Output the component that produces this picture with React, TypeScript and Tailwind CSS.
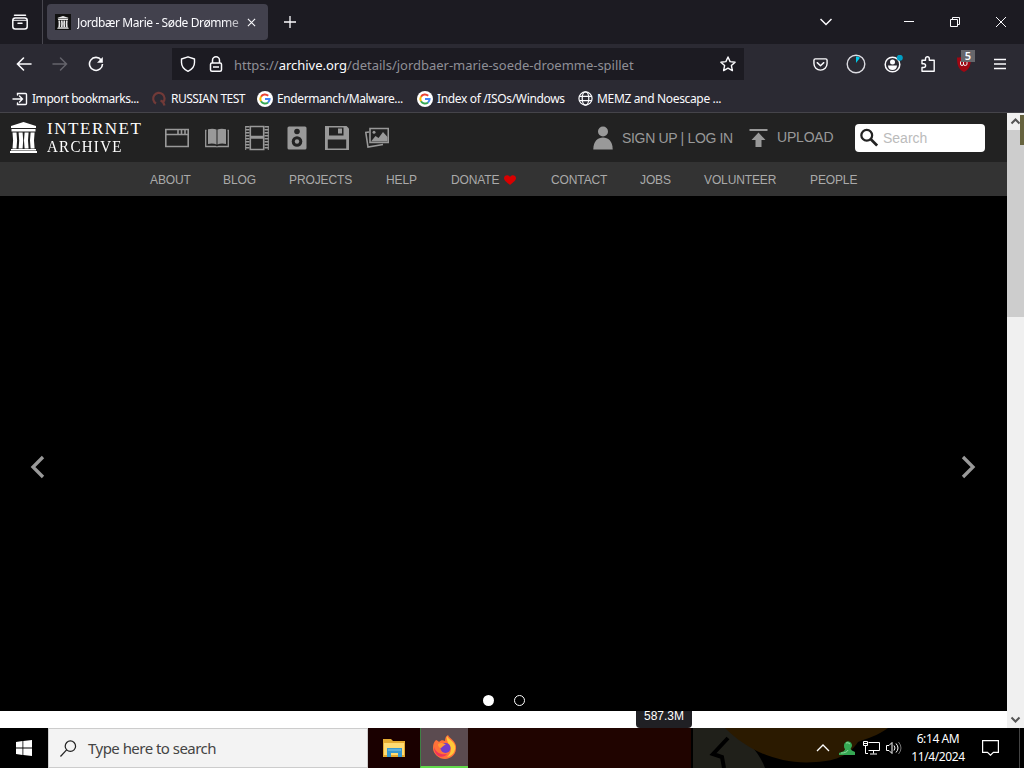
import React from 'react';

const ArchiveLogo: React.FC<{ className?: string }> = ({ className }) => (
    <svg viewBox="0 0 27 31" className={className} fill="currentColor">
        <path d="M13.5 0 26 4v2H1V4zM1.5 7h24v2.5h-24zM2.5 10.5h4l.6 8-.6 8h-4l.6-8zM8.6 10.5h4l.6 8-.6 8h-4l.6-8zM14.6 10.5h4l-.6 8 .6 8h-4l-.6-8zM20.6 10.5h4l-.6 8 .6 8h-4l-.6-8zM1 27h25v1.5H1zM0 29h27v2H0z" />
    </svg>
);

const GoogleIcon: React.FC = () => (
    <svg viewBox="0 0 16 16" className="w-4 h-4" fill="none" strokeWidth="2">
        <circle cx="8" cy="8" r="8" fill="#fff" />
        <path d="M4 5.7A4.6 4.6 0 0 1 11.2 4.8" stroke="#ea4335" />
        <path d="M4 5.6a4.7 4.7 0 0 0 0 4.8" stroke="#fbbc05" />
        <path d="M4 10.3a4.6 4.6 0 0 0 7 1.1" stroke="#34a853" />
        <path d="M8 8h4.6a4.7 4.7 0 0 1-1.6 3.5" stroke="#4285f4" />
    </svg>
);

const TabBar: React.FC = () => (
    <div className="h-11 flex items-center bg-[#1c1b22] text-[#fbfbfe]">
        <div className="w-[43px] h-full flex items-center justify-center border-r border-[#48474f] pr-[2px]">
            <svg viewBox="0 0 16 16" className="w-4 h-4" fill="none" stroke="currentColor" strokeWidth="1.5" strokeLinecap="round">
                <path d="M2.5 1.2h11M6 9.2h4" />
                <rect x=".8" y="4" width="14.4" height="11" rx="2.5" />
                <path d="M1 6.3h14" strokeWidth="1" />
            </svg>
        </div>
        <div className="ml-1 w-[221px] h-9 flex items-center rounded bg-[#42414d] pl-2">
            <div className="w-4 h-4 bg-[#111] flex items-center justify-center">
                <ArchiveLogo className="w-3 h-[13px] text-[#e8e8e8]" />
            </div>
            <div className="ml-[6px] w-[165px] pt-px whitespace-nowrap text-[12px] tracking-[-0.4px] [mask-image:linear-gradient(to_right,#000_88%,#0008)]">
                Jordbær Marie - Søde Drømme
            </div>
            <svg viewBox="0 0 10 10" className="ml-[5px] w-[9px] h-[9px]" stroke="currentColor" strokeWidth="1.2">
                <path d="m1 1 8 8M9 1 1 9" />
            </svg>
        </div>
        <svg viewBox="0 0 12 12" className="ml-4 w-3 h-3" stroke="currentColor" strokeWidth="1.3">
            <path d="M6 0v12M0 6h12" />
        </svg>
        <svg viewBox="0 0 12 8" className="ml-[524px] w-3 h-2" fill="none" stroke="currentColor" strokeWidth="1.5">
            <path d="m.5 1 5.5 5.5L11.5 1" />
        </svg>
        <svg viewBox="0 0 10 10" className="ml-[72px] w-[10px] h-[10px]" stroke="currentColor">
            <path d="M0 4.5h10" />
        </svg>
        <svg viewBox="0 0 10 10" className="ml-9 w-[10px] h-[10px]" fill="none" stroke="currentColor">
            <path d="M.5 2.5h7v7h-7zM2.5 2.5v-2h7v7h-2" />
        </svg>
        <svg viewBox="0 0 10 10" className="ml-9 w-[10px] h-[10px]" stroke="currentColor">
            <path d="m0 0 10 10M10 0 0 10" />
        </svg>
    </div>
);

const Toolbar: React.FC = () => (
    <div className="h-10 flex items-center bg-[#2b2a33] text-[#fbfbfe]">
        <svg viewBox="0 0 16 16" className="ml-4 w-4 h-4" fill="none" stroke="currentColor" strokeWidth="1.6" strokeLinecap="round">
            <path d="M15 8H1.5M7.5 2l-6 6 6 6" />
        </svg>
        <svg viewBox="0 0 16 16" className="ml-5 w-4 h-4 text-[#65646c]" fill="none" stroke="currentColor" strokeWidth="1.5" strokeLinecap="round">
            <path d="M1 8h13.5M8.5 2l6 6-6 6" />
        </svg>
        <svg viewBox="0 0 16 16" className="ml-5 w-4 h-4" fill="none" stroke="currentColor" strokeWidth="1.6">
            <path d="M13.2 4A6.5 6.5 0 1 0 14.5 8" />
            <path d="M14.8 1v5.800H9z" fill="currentColor" stroke="none" />
        </svg>
        <div className="ml-[68px] w-[572px] h-8 flex items-center bg-[#1c1b22] pl-2">
            <svg viewBox="0 0 16 16" className="w-4 h-4" fill="none" stroke="currentColor" strokeWidth="1.4" strokeLinejoin="round">
                <path d="M8 .8 14.500 3v3.500c0 4-2.500 7-6.500 8.800C4 13.500 1.500 10.500 1.500 6.500V3z" />
            </svg>
            <svg viewBox="0 0 16 16" className="ml-3 w-4 h-4" fill="none" stroke="currentColor" strokeWidth="1.5">
                <rect x="2.5" y="7" width="11" height="8.2" rx="1.5" />
                <path d="M4.500 7V4.300a3.500 3.500 0 0 1 7 0V7M5 11h6" />
            </svg>
            <div className="ml-[10px] w-[484px] pt-[3px] whitespace-nowrap text-[13px] tracking-[-0.02px] text-[#8f8f96]">
                https://<span className="text-[#fbfbfe]">archive.org</span>/details/jordbaer-marie-soede-droemme-spillet
            </div>
            <svg viewBox="0 0 16 16" className="ml-[2px] w-4 h-4" fill="none" stroke="currentColor" strokeWidth="1.4" strokeLinejoin="round">
                <path d="m8 1 2.100 4.600 5 .6-3.700 3.400 1 5L8 12.100l-4.400 2.500 1-5L.9 6.200l5-.6z" />
            </svg>
        </div>
        <svg viewBox="0 0 16 16" className="ml-[69px] w-[15px] h-[15px]" fill="none" stroke="currentColor" strokeWidth="1.5" strokeLinecap="round" strokeLinejoin="round">
            <path d="M2.500 2h11A1.500 1.500 0 0 1 15 3.500V7A7 7 0 0 1 1 7V3.500A1.500 1.500 0 0 1 2.500 2zM4.500 6 8 9.300 11.500 6" />
        </svg>
        <svg viewBox="0 0 20 20" className="ml-[18px] w-5 h-5" fill="none">
            <circle cx="10" cy="10" r="8.8" stroke="#dcdce2" strokeWidth="1.4" />
            <path d="M10 9V2.500a7 7 0 0 1 4 1.300z" fill="#00c8e8" />
        </svg>
        <svg viewBox="0 0 20 18" className="ml-[18px] w-5 h-[18px]" fill="none">
            <circle cx="8.5" cy="9.5" r="7.3" stroke="currentColor" strokeWidth="1.5" />
            <circle cx="8.5" cy="7" r="2.5" fill="currentColor" />
            <path d="M4 10.500h9c0 3-2 4.500-4.500 4.500S4 13.500 4 10.500z" fill="currentColor" />
            <circle cx="15.8" cy="2.8" r="3" fill="#009fc5" />
        </svg>
        <svg viewBox="0 0 16 16" className="ml-4 w-4 h-4" fill="none" stroke="currentColor" strokeWidth="1.4" strokeLinejoin="round">
            <path d="M2 4.200h3.500V2.700a1.900 1.900 0 0 1 3.800 0v1.500h4.900v11H2v-3.700h1.700a1.900 1.900 0 0 0 0-3.800H2z" />
        </svg>
        <div className="relative ml-5 w-4 h-4 flex items-center justify-center">
            <svg viewBox="0 0 16 16" className="w-4 h-4" fill="none">
                <path d="M8 0c2 1 4.500 1.500 7 1.500C15 10 13 13.500 8 16 3 13.500 1 10 1 1.500 3.500 1.500 6 1 8 0z" fill="#a00713" />
                <path d="M4.500 5.500V8q0 1.500 1.500 1.500T7.500 8V5.500m0 2.500q0 1.500 1.700 1.500T11 8V5.500" stroke="#eee" />
            </svg>
            <div className="absolute left-[5px] -top-[6px] w-[14px] h-[12px] bg-[#66666b] text-center text-[11px] font-semibold leading-[12px]">5</div>
        </div>
        <svg viewBox="0 0 12 12" className="ml-[22px] w-3 h-3" stroke="currentColor" strokeWidth="1.4">
            <path d="M0 1.500h12M0 6h12M0 10.500h12" />
        </svg>
    </div>
);

const Bookmarks: React.FC = () => (
    <div className="h-[29px] flex items-center bg-[#2b2a33] border-b border-[#45444a] pl-3 pt-px text-[12px] text-[#fbfbfe] whitespace-nowrap">
        <svg viewBox="0 0 16 16" className="w-4 h-4" fill="none" stroke="currentColor" strokeWidth="1.4" strokeLinecap="round">
            <path d="M5.500 4V2.500h8a1 1 0 0 1 1 1v9a1 1 0 0 1-1 1h-8V12M1 8h9.500M7.500 5l3 3-3 3" />
        </svg>
        <div className="ml-1 w-[119px] pt-px tracking-[-0.45px]">Import bookmarks...</div>
        <svg viewBox="0 0 16 16" className="w-4 h-4" fill="none" stroke="#713a38" strokeWidth="2.2">
            <path d="M5 12.500a5.700 5.700 0 1 1 7-1M9.500 9.500q3 1 4 5" />
        </svg>
        <div className="ml-1 w-[86px] pt-px tracking-[-0.5px]">RUSSIAN TEST</div>
        <GoogleIcon />
        <div className="ml-1 w-[140px] pt-px tracking-[-0.4px]">Endermanch/Malware...</div>
        <GoogleIcon />
        <div className="ml-1 w-[141px] pt-px tracking-[-0.35px]">Index of /ISOs/Windows</div>
        <svg viewBox="0 0 16 16" className="w-[15px] h-[15px]" fill="none" stroke="currentColor" strokeWidth="1.3">
            <circle cx="8" cy="8" r="7" />
            <ellipse cx="8" cy="8" rx="3.5" ry="7" />
            <path d="M1.500 5.700h13M1.500 10.300h13" />
        </svg>
        <div className="ml-1 pt-px tracking-[-0.34px]">MEMZ and Noescape ...</div>
    </div>
);

const MediaIcons: React.FC = () => (
    <div className="ml-[22px] mt-px flex gap-4 text-[#999]">
        <svg viewBox="0 0 24 26" className="w-6 h-[26px]" fill="none" stroke="currentColor" strokeWidth="1.6">
            <path d="M.8 4.500h22.400v17H.8zM1 9.500h22M13 5v4M16.500 5v4M20 5v4" />
        </svg>
        <svg viewBox="0 0 24 26" className="w-6 h-[26px]" fill="currentColor">
            <path d="M3 4.200Q8 3 11.500 4.500v15Q8 18 3 19zM21 4.200Q16 3 12.500 4.500v15Q16 18 21 19z" />
            <path d="M1.500 5.500H.7v16h9.800q1.500.8 3 0h9.800v-16h-.8" fill="none" stroke="currentColor" strokeWidth="1.3" />
        </svg>
        <svg viewBox="0 0 24 26" className="w-6 h-[26px]" fill="none" stroke="currentColor">
            <path d="M5.300 1.500h13.400v23H5.300zM5 13h14M5 11.500h14" strokeWidth="1.6" />
            <path d="M2.500 1v24M21.500 1v24" strokeWidth="4" strokeDasharray="1.500 1.500" />
            <path d="M.7 1v24M23.300 1v24" strokeWidth="1" />
        </svg>
        <svg viewBox="0 0 24 26" className="w-6 h-[26px]">
            <rect x="2.5" y="1.5" width="19" height="23" rx="1.5" fill="currentColor" />
            <circle cx="12" cy="6.5" r="2.8" fill="#222" />
            <circle cx="12" cy="16.5" r="5.3" fill="#222" />
            <circle cx="12" cy="16.5" r="2.2" fill="currentColor" />
        </svg>
        <svg viewBox="0 0 24 26" className="w-6 h-[26px]">
            <path d="M0 1h21.500L24 3.500V25H0z" fill="currentColor" />
            <path d="M4 2.500h14.500v8H4zM2.800 14.500h18.400v9H2.800z" fill="#222" />
            <path d="M13 3.500h4v5h-4z" fill="currentColor" />
        </svg>
        <svg viewBox="0 0 24 26" className="w-6 h-[26px]" fill="none" stroke="currentColor" strokeWidth="1.6">
            <path d="M5 3.500h18.300v14H5zM4 7 .8 7.500 3 22l15-2.500" />
            <path d="m6 16.500 4.500-5.500 3 2 4.500-6 4.500 5v4.500z" fill="currentColor" stroke="none" />
            <circle cx="9" cy="7.3" r="1.5" fill="currentColor" stroke="none" />
        </svg>
    </div>
);

const ArchiveHeader: React.FC = () => (
    <header className="h-[49px] flex items-center bg-[#222] pl-[10px] font-['Liberation_Sans',sans-serif] text-[14px] text-[#999] whitespace-nowrap">
        <ArchiveLogo className="w-[27px] h-[31px] text-white" />
        <div className="ml-[10px] mt-px w-[96px] font-['Liberation_Serif',serif] text-[17px] leading-[18px] text-white">
            <div><span className="inline-block origin-left tracking-[1.55px]">INTERNET</span></div>
            <div><span className="inline-block origin-left tracking-[1.5px] scale-x-[0.88]">ARCHIVE</span></div>
        </div>
        <MediaIcons />
        <svg viewBox="0 0 20 24" className="ml-[204px] w-5 h-6" fill="currentColor">
            <circle cx="10" cy="5.5" r="5" />
            <path d="M.3 23.500C.3 15 5 11.500 10 11.500s9.700 3.500 9.700 12z" />
        </svg>
        <div className="ml-[9px] w-[111px] pt-[2px] tracking-[-0.33px]">SIGN UP | LOG IN</div>
        <svg viewBox="0 0 20 20" className="ml-4 w-5 h-5" fill="currentColor">
            <path d="M.5 1h18v2H.5zM9.500 4.500 16.500 12h-4v7h-6v-7h-4z" />
        </svg>
        <div className="ml-2 w-[78px] tracking-[-0.2px]">UPLOAD</div>
        <div className="w-[130px] h-7 flex items-center rounded bg-white pl-[5px]">
            <svg viewBox="0 0 20 20" className="w-[18px] h-[19px]" fill="none" stroke="#222">
                <circle cx="7.5" cy="7.5" r="6" strokeWidth="2.5" />
                <path d="m12 12 7 7" strokeWidth="3" />
            </svg>
            <div className="ml-[5px] pt-px text-[#bbb]">Search</div>
        </div>
    </header>
);

const ArchiveNav: React.FC = () => (
    <nav className="h-[34px] flex items-center bg-[#333] pl-[150px] pt-[2px] font-['Liberation_Sans',sans-serif] text-[12px] tracking-[-0.12px] text-[#aaa] whitespace-nowrap">
        <a className="w-[73px]">ABOUT</a>
        <a className="w-[66px]">BLOG</a>
        <a className="w-[97px]">PROJECTS</a>
        <a className="w-[65px]">HELP</a>
        <a className="w-[100px] flex items-center">
            DONATE
            <svg viewBox="0 0 12 10" className="ml-[5px] w-3 h-[10px]" fill="#d90000">
                <path d="M6 10C3 7.500 0 5.500 0 3c0-3 4.500-4 6-1 1.500-3 6-2 6 1 0 2.500-3 4.500-6 7z" />
            </svg>
        </a>
        <a className="w-[89px]">CONTACT</a>
        <a className="w-16">JOBS</a>
        <a className="w-[106px]">VOLUNTEER</a>
        <a>PEOPLE</a>
    </nav>
);

const Carousel: React.FC = () => (
    <main className="relative h-[515px] flex items-center justify-between bg-black pl-[30px] pr-[31px] pt-[27px]">
        <svg viewBox="0 0 15 24" className="w-[15px] h-6" fill="none" stroke="#999" strokeWidth="3.3">
            <path d="M13 2 3 12l10 10" />
        </svg>
        <svg viewBox="0 0 15 24" className="w-[15px] h-6" fill="none" stroke="#999" strokeWidth="3.3">
            <path d="m2 2 10 10L2 22" />
        </svg>
        <div className="absolute left-[483px] bottom-[5px] flex gap-5">
            <div className="w-[11px] h-[11px] rounded-full bg-white" />
            <div className="w-[11px] h-[11px] rounded-full border border-white" />
        </div>
    </main>
);

const Scrollbar: React.FC = () => (
    <div className="relative w-[17px] h-full flex flex-col items-center bg-[#f0f0f0] text-[#555]">
        <svg viewBox="0 0 17 17" className="w-[17px] h-[17px]" fill="none" stroke="currentColor" strokeWidth="2">
            <path d="m4.500 10.500 4-4 4 4" />
        </svg>
        <div className="w-[17px] h-[187px] bg-[#cdcdcd]" />
        <svg viewBox="0 0 17 17" className="mt-auto w-[17px] h-[17px]" fill="none" stroke="currentColor" strokeWidth="2">
            <path d="m4.500 6.500 4 4 4-4" />
        </svg>
        <div className="absolute right-0 top-[2px] w-[4px] h-[30px] bg-[#66633e]" />
    </div>
);

const Taskbar: React.FC = () => (
    <footer className="relative h-10 flex items-center bg-black text-white">
        <div className="w-12 flex justify-center">
            <svg viewBox="0 0 16 16" className="w-4 h-4" fill="currentColor">
                <path d="m0 2 6.500-1v6.500H0zM7.300.9 16 0v7.500H7.300zM0 8.400h6.500V15L0 14zM7.300 8.400H16V16l-8.700-1z" />
            </svg>
        </div>
        <div className="w-80 h-10 flex items-center bg-[#f3f3f3] border border-[#ccc] pl-[11px] text-[#444]">
            <svg viewBox="0 0 18 18" className="w-[17px] h-[17px]" fill="none" stroke="#222" strokeWidth="1.3">
                <circle cx="11" cy="6.5" r="5.5" />
                <path d="m7 10.500-6.500 7" />
            </svg>
            <div className="ml-[11px] text-[15px] tracking-[-0.53px] whitespace-nowrap">Type here to search</div>
        </div>
        <div className="w-[52px] h-full flex items-center justify-center bg-[#1a0000]">
            <svg viewBox="0 0 22 18" className="w-[22px] h-[18px]">
                <path d="M0 0h8l2 2h12v16H0z" fill="#e5ab32" />
                <path d="M1 4h20v12H1z" fill="#ffdb72" />
                <path d="M4 9h15v9h-4v-4H8v4H4z" fill="#3898cf" />
                <path d="M5 11h13" stroke="#86c8e5" />
            </svg>
        </div>
        <div className="w-12 h-full flex items-center justify-center bg-[#5b4b50] border-b-2 border-l border-b-[#62d94b] border-l-[#3f8044]">
            <svg viewBox="0 0 24 24" className="w-6 h-6">
                <path d="M3 5c1 0 2 1 3 2 2-2 4-2 6-1 0-3 1-5 3-6 1 3 7 5 8 11 1 8-5 13-11 13S0 19 0 13c0-4 1-6 3-8z" fill="#ff7139" />
                <path d="M14 1c1 3 7 5 8 10 1 6-3 10-8 11 5-5 5-9 1-14-1-3-2-5-1-7z" fill="#ffc739" />
                <path d="M1 12c2 6 7 8 13 7-2 3-7 4-10 1-2-2-3-5-3-8z" fill="#f0345b" />
                <circle cx="12.5" cy="13" r="5" fill="#713ccb" />
                <path d="M5 9c3-2 6-1 8 1-3 0-3 2-5 3-2 0-3-2-3-4z" fill="#ff9a35" />
            </svg>
        </div>
        <div className="w-[223px] h-full bg-[#200400]" />
        {/* desktop wallpaper showing through the translucent bar */}
        <svg viewBox="0 0 200 40" className="w-[200px] h-10 -mr-[75px]">
            <path d="M2 0h37q27 18 35 40H2z" fill="#20201a" />
            <path d="M34 0h163c-11 8-20 10-30 14-8 12-20 19-42 20-38 3-69-12-91-34z" fill="#2b1a00" />
            <path d="M37 10 22 26l9 3 2 11" fill="none" stroke="#000" strokeWidth="4" />
        </svg>
        <svg viewBox="0 0 14 8" className="relative w-[14px] h-2" fill="none" stroke="currentColor" strokeWidth="1.3">
            <path d="m1 7 6-6 6 6" />
        </svg>
        <svg viewBox="0 0 16 16" className="relative ml-[9px] w-4 h-4" fill="#35a853">
            <path d="M5 5a4 4 0 1 1 7 3c-1 1 0 2 2 3l2 1v3H0v-2c3-1 6-2 6-4-1-1-1-2-1-4z" />
            <path d="M7 3q2-1 4 1M2 13q6 0 7-3" stroke="#8ed69b" fill="none" />
        </svg>
        <svg viewBox="0 0 17 14" className="relative ml-2 w-[17px] h-[14px]" fill="none" stroke="currentColor">
            <path d="M5.500 1.500h11v8h-11M10.500 9.500v3M7 13h7M.5.500h4v4h-4zM2.500 4.500v8H5M1 2.500h3" />
        </svg>
        <svg viewBox="0 0 17 14" className="relative ml-[6px] w-[17px] h-[14px]" fill="none" stroke="currentColor">
            <path d="M.5 4.500H3l3-3v11l-3-3H.5z" />
            <path d="M8 4.500q2 2.500 0 5M10 2.500q4 4.500 0 9" />
            <path d="M12.500 1q5 6 0 12" stroke="#777" />
        </svg>
        <div className="relative ml-[6px] w-[58px] text-center text-[12px] leading-[18px] tracking-[-0.4px] whitespace-nowrap">
            <div>6:14 AM</div>
            <div>11/4/2024</div>
        </div>
        <svg viewBox="0 0 17 16" className="ml-[15px] w-[17px] h-4" fill="none" stroke="currentColor" strokeWidth="1.2">
            <path d="M.6.600h15.800v11.800h-5L8.500 15.200l-3-2.800H.6z" />
        </svg>
        <div className="ml-auto mr-1 w-px h-full bg-[#444]" />
    </footer>
);

const App: React.FC = () => (
    <div className="w-[1024px] h-[768px] flex flex-col overflow-hidden bg-black font-['Noto_Sans','Open_Sans',sans-serif] [&_svg]:shrink-0 [&_div]:shrink-0">
        <TabBar />
        <Toolbar />
        <Bookmarks />
        <div className="h-[615px] flex">
            <div className="relative w-[1007px] bg-white">
                <ArchiveHeader />
                <ArchiveNav />
                <Carousel />
                <div className="absolute left-[636px] bottom-0 w-14 h-[17px] rounded-b bg-[#202024] text-center font-['Liberation_Sans',sans-serif] text-[12px] leading-[11px] text-white">587.3M</div>
            </div>
            <Scrollbar />
        </div>
        <Taskbar />
    </div>
);

export default App;
